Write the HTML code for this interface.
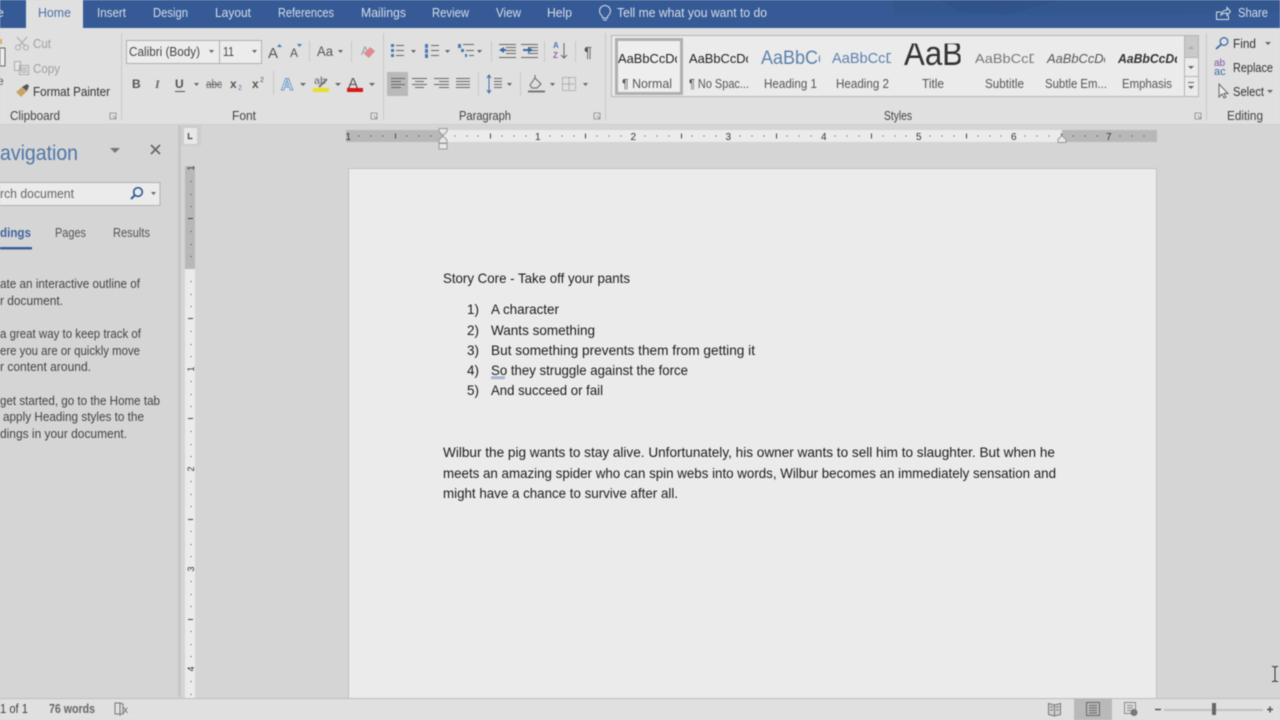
<!DOCTYPE html>
<html lang="en"><head><meta charset="utf-8"><title>Word</title>
<style>
html,body{margin:0;padding:0;width:1280px;height:720px;overflow:hidden;background:#d5d5d5}
svg{display:block;filter:blur(.45px)}
text{font-family:"Liberation Sans",sans-serif;font-size:12.5px;fill:#444;dominant-baseline:auto}
.tab{fill:#d6deea;font-size:13px}
.d{fill:#1c1c1c;font-size:14px}
.g{fill:#555;font-size:12.5px}
.n{fill:#444;font-size:12.5px}
.s{stroke:#c8c8c8;stroke-width:1}
.i{fill:none;stroke:#666;stroke-width:1}
.a{fill:#666}
</style></head><body>
<svg xmlns="http://www.w3.org/2000/svg" width="1280" height="720" viewBox="0 0 1280 720">
<defs>
<clipPath id="c1"><rect x="617" y="44" width="60" height="26"/></clipPath>
<clipPath id="c2"><rect x="688" y="44" width="60" height="26"/></clipPath>
<clipPath id="c3"><rect x="760" y="44" width="60" height="26"/></clipPath>
<clipPath id="c4"><rect x="831" y="44" width="60" height="26"/></clipPath>
<clipPath id="c5"><rect x="974" y="44" width="60" height="26"/></clipPath>
<clipPath id="c6"><rect x="1046" y="44" width="59" height="26"/></clipPath>
<clipPath id="c7"><rect x="1117" y="44" width="60" height="26"/></clipPath>
<clipPath id="tc"><rect x="900" y="43.500" width="60.500" height="30"/></clipPath>
</defs>
<rect width="1280" height="720" fill="#d5d5d5"/>
<!-- title -->
<rect width="1280" height="28" fill="#355a96"/>
<polygon points="893,0 1280,0 1280,12 1150,15 893,15" fill="#33578f"/>
<polygon points="940,0 1060,0 1010,14 960,12" fill="#31538b"/>
<rect x="26" width="57" height="28" fill="#e0e0e0"/>
<text x="-4" y="17" textLength="8" lengthAdjust="spacingAndGlyphs" class="tab">e</text>
<text x="38" y="17" textLength="33" lengthAdjust="spacingAndGlyphs" class="tab" style="fill:#4a72a8">Home</text>
<text x="97" y="17" textLength="29" lengthAdjust="spacingAndGlyphs" class="tab">Insert</text>
<text x="153" y="17" textLength="35" lengthAdjust="spacingAndGlyphs" class="tab">Design</text>
<text x="215" y="17" textLength="36" lengthAdjust="spacingAndGlyphs" class="tab">Layout</text>
<text x="278" y="17" textLength="56" lengthAdjust="spacingAndGlyphs" class="tab">References</text>
<text x="361" y="17" textLength="45" lengthAdjust="spacingAndGlyphs" class="tab">Mailings</text>
<text x="432" y="17" textLength="37" lengthAdjust="spacingAndGlyphs" class="tab">Review</text>
<text x="496" y="17" textLength="25" lengthAdjust="spacingAndGlyphs" class="tab">View</text>
<text x="547" y="17" textLength="25" lengthAdjust="spacingAndGlyphs" class="tab">Help</text>
<path d="M602.500 16.500c-1-1-3-2.800-3-5.500a5.500 5.500 0 0 1 11 0c0 2.700-2 4.500-3 5.500v1.500h-5zM603 20h4" fill="none" stroke="#d6deea"/>
<text x="617" y="17" textLength="150" lengthAdjust="spacingAndGlyphs" class="tab">Tell me what you want to do</text>
<path d="M1221 12h-4.500v7.500h12v-4M1221 15c.5-3 3-5 6-5V7.500l3.500 4-3.500 4v-2.500c-2.500 0-4.500.5-6 2z" fill="none" stroke="#d6deea"/>
<text x="1238" y="17" textLength="30" lengthAdjust="spacingAndGlyphs" class="tab">Share</text>
<!-- ribbon -->
<rect y="28" width="1280" height="96" fill="#e0e0e0"/>
<rect y="124" width="1280" height="1" fill="#cfcfcf"/>
<path d="M121.500 33v87M383.500 33v87M605.500 33v87M1206.500 33v87" class="s"/>
<text x="10" y="120" textLength="50" lengthAdjust="spacingAndGlyphs" class="n">Clipboard</text>
<text x="232" y="120" textLength="24" lengthAdjust="spacingAndGlyphs" class="n">Font</text>
<text x="459" y="120" textLength="52" lengthAdjust="spacingAndGlyphs" class="n">Paragraph</text>
<text x="884" y="120" textLength="28" lengthAdjust="spacingAndGlyphs" class="n">Styles</text>
<text x="1227" y="120" textLength="36" lengthAdjust="spacingAndGlyphs" class="n">Editing</text>
<path d="M110 113h6v6h-6zM113 116l3 3M371 113h6v6h-6zM374 116l3 3M594 113h6v6h-6zM597 116l3 3M1195 113h6v6h-6zM1198 116l3 3" fill="none" stroke="#888" stroke-width=".8"/>
<!-- clipboard -->
<path d="M0 39h2v5H0z" fill="#d8b060"/><path d="M0 48h5v18H0z" fill="#eee" stroke="#666"/>
<text x="-3" y="85" style="font-size:12px;fill:#555">e</text>
<path d="M17 37l8 9M27 37l-8 9" stroke="#aaa" fill="none"/><circle cx="18" cy="47.500" r="2.500" fill="none" stroke="#aaa"/><circle cx="26" cy="47.500" r="2.500" fill="none" stroke="#aaa"/>
<text x="33" y="48" textLength="18" lengthAdjust="spacingAndGlyphs" style="fill:#a0a0a0">Cut</text>
<path d="M14.500 61.500h6v9h-6zM19.500 65.500h9v9h-9zM21 68h6M21 70h6M21 72h6" fill="#e4e4e4" stroke="#aaa"/>
<text x="33" y="73" textLength="27" lengthAdjust="spacingAndGlyphs" style="fill:#a0a0a0">Copy</text>
<path d="M16 92l6-5 5 4-6 6z" fill="#c8a468"/><path d="M22 87l5-3 2 2-2 5z" fill="#555"/>
<text x="33" y="96" textLength="77" lengthAdjust="spacingAndGlyphs" style="fill:#333">Format Painter</text>
<!-- font -->
<rect x="126.500" y="40.500" width="93" height="23" fill="#ececec" stroke="#b0b0b0"/>
<rect x="219.500" y="40.500" width="42" height="23" fill="#ececec" stroke="#b0b0b0"/>
<text x="129" y="56" textLength="71" lengthAdjust="spacingAndGlyphs" style="fill:#444">Calibri (Body)</text>
<text x="223" y="56" textLength="11" lengthAdjust="spacingAndGlyphs" style="fill:#444">11</text>
<path d="M209 50h5l-2.500 3zM252 50h5l-2.500 3zM338 50h5l-2.500 3zM194 83h5l-2.500 3zM300 83h6l-3 3zM335 83h6l-3 3zM369 83h6l-3 3z" class="a"/>
<text x="268" y="58" style="font-size:15px;fill:#555">A</text><path d="M277 47h5l-2.500-3z" fill="#4a7ab0"/>
<text x="290" y="57" style="font-size:12px;fill:#555">A</text><path d="M297 44h5l-2.500 3z" fill="#4a7ab0"/>
<path d="M309.500 41v21M351.500 41v21" class="s"/>
<text x="317" y="56" textLength="16" lengthAdjust="spacingAndGlyphs" style="fill:#555;font-size:14px">Aa</text>
<text x="361" y="55" style="font-size:12px;fill:#999">A</text><path d="M364 54l6-7 5 4-6 7z" fill="#e08a90"/>
<text x="132" y="88" style="font:bold 12px 'Liberation Sans';fill:#555">B</text>
<text x="155" y="88" style="font:italic bold 12px 'Liberation Serif';fill:#666">I</text>
<text x="175" y="88" style="font:bold 12px 'Liberation Sans';fill:#555">U</text><path d="M175 91.500h10" stroke="#555"/>
<text x="206" y="88" textLength="16" lengthAdjust="spacingAndGlyphs" style="fill:#666;font-size:11.500px">abc</text><path d="M206 84.500h16" stroke="#666"/>
<text x="230" y="88" style="font:bold 12px 'Liberation Sans';fill:#555">x</text><text x="238" y="90" style="font-size:7px;fill:#4a7ab0">2</text>
<text x="252" y="88" style="font:bold 12px 'Liberation Sans';fill:#555">x</text><text x="260" y="82" style="font-size:7px;fill:#555">2</text>
<path d="M273.500 71v24M478.500 72v24M520.500 72v24M491.500 41v21M544.500 41v21M575.500 41v21" class="s"/>
<text x="281" y="90" style="font:bold 17px 'Liberation Sans';fill:#dbe6f2;stroke:#6a94c4;stroke-width:.9">A</text>
<text x="314" y="84" textLength="12" lengthAdjust="spacingAndGlyphs" style="fill:#666;font-size:10px">ab</text><path d="M319 87l8-8" stroke="#777" stroke-width="2"/>
<rect x="313" y="88" width="16" height="4" fill="#e8e020"/>
<text x="348" y="88" style="font-size:15px;fill:#555">A</text><rect x="347" y="88" width="16" height="4" fill="#d81818"/>
<!-- paragraph -->
<g fill="#666" stroke="none">
<path d="M391 44h3v3h-3zM391 49h3v3h-3zM391 54h3v3h-3z" fill="#4a7ab0"/>
<path d="M396 45h8v1h-8zM396 50h8v1h-8zM396 55h8v1h-8zM431 45h8v1h-8zM431 50h8v1h-8zM431 55h8v1h-8zM463 44h11v1h-11zM466 50h8v1h-8zM469 55h5v1h-5zM506 47h10v1h-10zM506 50h10v1h-10zM506 53h10v1h-10zM499 57h17v1h-17zM499 44h17v1h-17zM528 47h10v1h-10zM528 50h10v1h-10zM528 53h10v1h-10zM521 57h17v1h-17zM521 44h17v1h-17z"/>
<path d="M411 50h5l-2.500 3zM445 50h5l-2.500 3zM477 50h5l-2.500 3zM507 83h5l-2.500 3zM550 83h5l-2.500 3zM583 83h5l-2.500 3z"/>
<path d="M425 44h3v4h-3zM425 49h3v4h-3zM425 54h3v4h-3zM458 44h3v4h-3zM461 49h3v3h-3zM465 54h2v3h-2z" fill="#4a7ab0"/>
<path d="M499 50l5-3v6zM504 49h2v2h-2zM533 50l-5-3v6zM523 49h5v2h-5z" fill="#3a6aa8"/>
</g>
<text x="553" y="48" style="font:bold 8px 'Liberation Sans';fill:#4a7ab0">A</text><text x="553" y="58" style="font:bold 8px 'Liberation Sans';fill:#9060a8">Z</text><path d="M564 43v15M561 55l3 3 3-3" fill="none" stroke="#666"/>
<text x="584" y="57" style="font-size:15px;fill:#555">¶</text>
<rect x="387" y="72" width="21" height="24" fill="#b9b9b9"/>
<path d="M391 78.500h14M391 81.500h10M391 84.500h14M391 87.500h10M412 78.500h15M415 81.500h9M412 84.500h15M415 87.500h9M434 78.500h15M439 81.500h10M434 84.500h15M439 87.500h10M456 78.500h14M456 81.500h14M456 84.500h14M456 87.500h14" stroke="#666" fill="none"/>
<path d="M494 78.500h8M494 81.500h8M494 84.500h8M494 87.500h8" stroke="#666" fill="none"/>
<path d="M489 76v16M487 78l2-3 2 3M487 90l2 3 2-3" fill="none" stroke="#3a6aa8"/>
<path d="M530 85l5-7 6 6-4 4h-5zM535 78v-3" fill="none" stroke="#666"/><path d="M528 91.500h17" stroke="#777" stroke-width="2"/>
<path d="M562.500 77.500h13v13h-13z" fill="none" stroke="#999" stroke-dasharray="1.500 1"/><path d="M569 78v12M563 84h12" stroke="#888" stroke-dasharray="1 1"/>
<!-- styles -->
<rect x="611.500" y="35.500" width="587" height="61" fill="#ebebeb" stroke="#b5b5b5"/>
<rect x="1184" y="36" width="14" height="21" fill="#c9c9c9"/>
<path d="M1184.500 35v61M1184.500 57.500h14M1184.500 76.500h14" stroke="#b5b5b5" fill="none"/>
<path d="M1188 49h6l-3-3z" fill="#aaa"/><path d="M1188 66h6l-3 3zM1188 86h6l-3 3z" fill="#666"/><path d="M1188 82.500h6" stroke="#666"/>
<rect x="616.500" y="39.500" width="65" height="54" fill="#eee" stroke="#b0b0b0" stroke-width="3"/>
<g clip-path="url(#c1)"><text x="618" y="63" textLength="63" lengthAdjust="spacingAndGlyphs" style="fill:#222;font-size:13px">AaBbCcDc</text></g>
<g clip-path="url(#c2)"><text x="689" y="63" textLength="63" lengthAdjust="spacingAndGlyphs" style="fill:#222;font-size:13px">AaBbCcDc</text></g>
<g clip-path="url(#c3)"><text x="761" y="64" textLength="66" lengthAdjust="spacingAndGlyphs" style="fill:#5b81ad;font-size:19px">AaBbCc</text></g>
<g clip-path="url(#c4)"><text x="832" y="63" textLength="64" lengthAdjust="spacingAndGlyphs" style="fill:#5b81ad;font-size:15px">AaBbCcD</text></g>
<g clip-path="url(#c5)"><text x="975" y="63" textLength="64" lengthAdjust="spacingAndGlyphs" style="fill:#777;font-size:13px">AaBbCcD</text></g>
<g clip-path="url(#c6)"><text x="1047" y="63" textLength="63" lengthAdjust="spacingAndGlyphs" style="fill:#555;font-size:13px;font-style:italic">AaBbCcDc</text></g>
<g clip-path="url(#c7)"><text x="1118" y="63" textLength="63" lengthAdjust="spacingAndGlyphs" style="fill:#333;font-size:13px;font-style:italic;font-weight:bold">AaBbCcDc</text></g>
<g clip-path="url(#tc)"><text x="904" y="65" textLength="59" lengthAdjust="spacingAndGlyphs" style="fill:#333;font-size:34px">AaB</text></g>
<text x="622" y="88" textLength="50" lengthAdjust="spacingAndGlyphs" class="g">¶ Normal</text>
<text x="689" y="88" textLength="60" lengthAdjust="spacingAndGlyphs" class="g">¶ No Spac...</text>
<text x="764" y="88" textLength="53" lengthAdjust="spacingAndGlyphs" class="g">Heading 1</text>
<text x="836" y="88" textLength="53" lengthAdjust="spacingAndGlyphs" class="g">Heading 2</text>
<text x="922" y="88" textLength="22" lengthAdjust="spacingAndGlyphs" class="g">Title</text>
<text x="985" y="88" textLength="39" lengthAdjust="spacingAndGlyphs" class="g">Subtitle</text>
<text x="1045" y="88" textLength="62" lengthAdjust="spacingAndGlyphs" class="g">Subtle Em...</text>
<text x="1122" y="88" textLength="50" lengthAdjust="spacingAndGlyphs" class="g">Emphasis</text>
<!-- editing -->
<circle cx="1224" cy="41.500" r="3.800" fill="none" stroke="#3a6aa8" stroke-width="1.300"/><path d="M1221 44.500l-5 4.500" stroke="#3a6aa8" stroke-width="1.800"/>
<text x="1233" y="48" textLength="23" lengthAdjust="spacingAndGlyphs" style="fill:#333">Find</text>
<path d="M1265 42h6l-3 3zM1267 90h6l-3 3z" fill="#666"/>
<text x="1214" y="66" style="font-size:10px;fill:#8050a0">ab</text><text x="1214" y="75" style="font-size:11px;fill:#3a6aa8">ac</text>
<text x="1233" y="72" textLength="40" lengthAdjust="spacingAndGlyphs" style="fill:#333">Replace</text>
<path d="M1219 84v13l3-3 2 4 2-1-2-3.500h4z" fill="#eee" stroke="#666"/>
<text x="1233" y="96" textLength="31" lengthAdjust="spacingAndGlyphs" style="fill:#333">Select</text>
<!-- nav pane -->
<rect x="178" y="125" width="3" height="572" fill="#c6c6c6"/>
<text x="0" y="160" textLength="78" lengthAdjust="spacingAndGlyphs" style="fill:#4f76a8;font-size:21px">avigation</text>
<path d="M110 148h10l-5 5z" fill="#777"/>
<path d="M151 145l9 9M160 145l-9 9" stroke="#666" stroke-width="1.700"/>
<rect x="-3" y="182.500" width="163" height="23" fill="#ebebeb" stroke="#b0b0b0"/>
<text x="0" y="198" textLength="74" lengthAdjust="spacingAndGlyphs" style="fill:#666">rch document</text>
<circle cx="138" cy="192" r="4.300" fill="none" stroke="#2f5c96" stroke-width="1.700"/><path d="M134.500 195.500l-3.500 3.500" stroke="#2f5c96" stroke-width="2"/>
<path d="M151 192h5l-2.500 3z" fill="#666"/>
<text x="0" y="237" textLength="31" lengthAdjust="spacingAndGlyphs" style="fill:#3f659c;font-weight:bold">dings</text>
<rect x="0" y="247" width="32" height="2.500" fill="#3a5f9c"/>
<text x="55" y="237" textLength="31" lengthAdjust="spacingAndGlyphs" style="fill:#555">Pages</text>
<text x="113" y="237" textLength="37" lengthAdjust="spacingAndGlyphs" style="fill:#555">Results</text>
<text x="0" y="288" textLength="140" lengthAdjust="spacingAndGlyphs">ate an interactive outline of</text>
<text x="0" y="305" textLength="63" lengthAdjust="spacingAndGlyphs">r document.</text>
<text x="0" y="338" textLength="141" lengthAdjust="spacingAndGlyphs">a great way to keep track of</text>
<text x="0" y="355" textLength="140" lengthAdjust="spacingAndGlyphs">ere you are or quickly move</text>
<text x="0" y="371" textLength="91" lengthAdjust="spacingAndGlyphs">r content around.</text>
<text x="0" y="405" textLength="160" lengthAdjust="spacingAndGlyphs">get started, go to the Home tab</text>
<text x="3" y="421" textLength="141" lengthAdjust="spacingAndGlyphs">apply Heading styles to the</text>
<text x="0" y="438" textLength="127" lengthAdjust="spacingAndGlyphs">dings in your document.</text>
<!-- corner + v ruler -->
<rect x="181" y="125" width="20" height="21" fill="#cdcdcd"/>
<rect x="184" y="128" width="13" height="16" fill="#e8e8e8"/>
<path d="M188.500 133v5.500h4" fill="none" stroke="#444" stroke-width="1.300"/>
<rect x="185" y="166" width="10" height="103" fill="#b8b8b8"/>
<rect x="185" y="269" width="10" height="429" fill="#ebebeb"/>
<path d="M191 181v1M191 194v1M191 206v1M191 231v1M191 244v1M191 256v1M191 281v1M191 294v1M191 306v1M191 331v1M191 344v1M191 356v1M191 381v1M191 394v1M191 406v1M191 431v1M191 444v1M191 456v1M191 481v1M191 494v1M191 506v1M191 531v1M191 544v1M191 556v1M191 581v1M191 594v1M191 606v1M191 631v1M191 644v1M191 656v1M191 681v1M191 694v1" stroke="#444"/>
<path d="M188 218.500h5M188 318.500h5M188 418.500h5M188 519.500h5M188 619.500h5" stroke="#444"/>
<text transform="translate(194,168) rotate(-90)" text-anchor="middle" style="font-size:9px;fill:#333">1</text>
<text transform="translate(194,369) rotate(-90)" text-anchor="middle" style="font-size:9px;fill:#333">1</text>
<text transform="translate(194,469) rotate(-90)" text-anchor="middle" style="font-size:9px;fill:#333">2</text>
<text transform="translate(194,569) rotate(-90)" text-anchor="middle" style="font-size:9px;fill:#333">3</text>
<text transform="translate(194,669) rotate(-90)" text-anchor="middle" style="font-size:9px;fill:#333">4</text>
<!-- h ruler -->
<rect x="346" y="130" width="97" height="12" fill="#b8b8b8"/>
<rect x="443" y="130" width="619" height="12" fill="#ebebeb"/>
<rect x="1062" y="130" width="95" height="12" fill="#b8b8b8"/>
<path d="M359 135.500v1M371 135.500v1M383 135.500v1M407 135.500v1M419 135.500v1M431 135.500v1M455 135.500v1M467 135.500v1M478 135.500v1M502 135.500v1M514 135.500v1M526 135.500v1M550 135.500v1M562 135.500v1M574 135.500v1M597 135.500v1M609 135.500v1M621 135.500v1M645 135.500v1M657 135.500v1M669 135.500v1M692 135.500v1M704 135.500v1M716 135.500v1M740 135.500v1M752 135.500v1M764 135.500v1M787 135.500v1M799 135.500v1M811 135.500v1M835 135.500v1M847 135.500v1M859 135.500v1M883 135.500v1M895 135.500v1M906 135.500v1M930 135.500v1M942 135.500v1M954 135.500v1M978 135.500v1M990 135.500v1M1001 135.500v1M1025 135.500v1M1037 135.500v1M1049 135.500v1M1073 135.500v1M1085 135.500v1M1097 135.500v1M1120 135.500v1M1132 135.500v1M1144 135.500v1" stroke="#444"/>
<path d="M395.500 133.500v5M490.500 133.500v5M585.500 133.500v5M681.500 133.500v5M776.500 133.500v5M871.500 133.500v5M966.500 133.500v5M1061.500 133.500v5" stroke="#444"/>
<text x="345.500" y="140" style="font-size:10px;fill:#333">1</text>
<text x="535" y="140" style="font-size:10px;fill:#333">1</text>
<text x="630.500" y="140" style="font-size:10px;fill:#333">2</text>
<text x="725.500" y="140" style="font-size:10px;fill:#333">3</text>
<text x="821" y="140" style="font-size:10px;fill:#333">4</text>
<text x="916" y="140" style="font-size:10px;fill:#333">5</text>
<text x="1011" y="140" style="font-size:10px;fill:#333">6</text>
<text x="1106" y="140" style="font-size:10px;fill:#333">7</text>
<path d="M439 128.500h8v3l-4 4-4-4zM443 136l4 4v3h-8v-3zM439 143.500h8v5.500h-8z" fill="#e8e8e8" stroke="#999"/>
<path d="M1062 135.500l4 4v3h-8v-3z" fill="#e8e8e8" stroke="#999"/>
<!-- page -->
<rect x="348.500" y="168.500" width="808" height="531" fill="#ebebeb" stroke="#c2c2c2"/>
<text x="443" y="283" textLength="187" lengthAdjust="spacingAndGlyphs" class="d">Story Core - Take off your pants</text>
<text x="467" y="314" textLength="12" lengthAdjust="spacingAndGlyphs" class="d">1)</text>
<text x="491" y="314" textLength="68" lengthAdjust="spacingAndGlyphs" class="d">A character</text>
<text x="467" y="335" textLength="12" lengthAdjust="spacingAndGlyphs" class="d">2)</text>
<text x="491" y="335" textLength="104" lengthAdjust="spacingAndGlyphs" class="d">Wants something</text>
<text x="467" y="355" textLength="12" lengthAdjust="spacingAndGlyphs" class="d">3)</text>
<text x="491" y="355" textLength="264" lengthAdjust="spacingAndGlyphs" class="d">But something prevents them from getting it</text>
<text x="467" y="375" textLength="12" lengthAdjust="spacingAndGlyphs" class="d">4)</text>
<text x="491" y="375" textLength="197" lengthAdjust="spacingAndGlyphs" class="d">So they struggle against the force</text>
<path d="M491 377h14M491 378.500h14" stroke="#6a85b8" stroke-width=".8"/>
<text x="467" y="395" textLength="12" lengthAdjust="spacingAndGlyphs" class="d">5)</text>
<text x="491" y="395" textLength="112" lengthAdjust="spacingAndGlyphs" class="d">And succeed or fail</text>
<text x="443" y="457" textLength="612" lengthAdjust="spacingAndGlyphs" class="d">Wilbur the pig wants to stay alive. Unfortunately, his owner wants to sell him to slaughter. But when he</text>
<text x="443" y="478" textLength="613" lengthAdjust="spacingAndGlyphs" class="d">meets an amazing spider who can spin webs into words, Wilbur becomes an immediately sensation and</text>
<text x="443" y="498" textLength="235" lengthAdjust="spacingAndGlyphs" class="d">might have a chance to survive after all.</text>
<!-- cursor -->
<path d="M1272 666.500h2l1 1 1-1h2M1275 667v14M1272 681.500h2l1-1 1 1h2" fill="none" stroke="#333"/>
<!-- status -->
<rect y="698" width="1280" height="22" fill="#e0e0e0"/>
<rect y="698" width="1280" height="1" fill="#bdbdbd"/>
<text x="0" y="713" textLength="28" lengthAdjust="spacingAndGlyphs" style="fill:#444">1 of 1</text>
<text x="49" y="713" textLength="46" lengthAdjust="spacingAndGlyphs" style="fill:#666;font-weight:bold">76 words</text>
<path d="M115 703h5v11h-5zM120 703l3 1v10l-3 0zM120 714v2" fill="none" stroke="#777"/><text x="123" y="713" style="font-size:10px;fill:#666">x</text>
<path d="M1048.500 703.500l6 1.500 6-1.500v11l-6 1.500-6-1.500zM1054.500 705v11M1050 707h3M1050 710h3M1056 707h3M1056 710h3" fill="#d0d0d0" stroke="#777"/>
<rect x="1074" y="699" width="38" height="21" fill="#b9b9b9"/>
<path d="M1086.500 702.500h13v13h-13zM1089 705.500h8M1089 708h8M1089 710.500h8M1089 713h8" fill="none" stroke="#666"/>
<path d="M1124.500 702.500h11v11h-11zM1127 705.500h6M1127 708h6M1127 710.500h4" fill="none" stroke="#888"/><circle cx="1134" cy="712.500" r="3.500" fill="#777"/>
<path d="M1155 709.500h6M1267 709.500h6M1270 706.500v6" stroke="#555" stroke-width="1.500"/>
<rect x="1164" y="709" width="99" height="2" fill="#c0c0c0"/>
<rect x="1212" y="703" width="4" height="12" fill="#666"/>
</svg>
</body></html>
